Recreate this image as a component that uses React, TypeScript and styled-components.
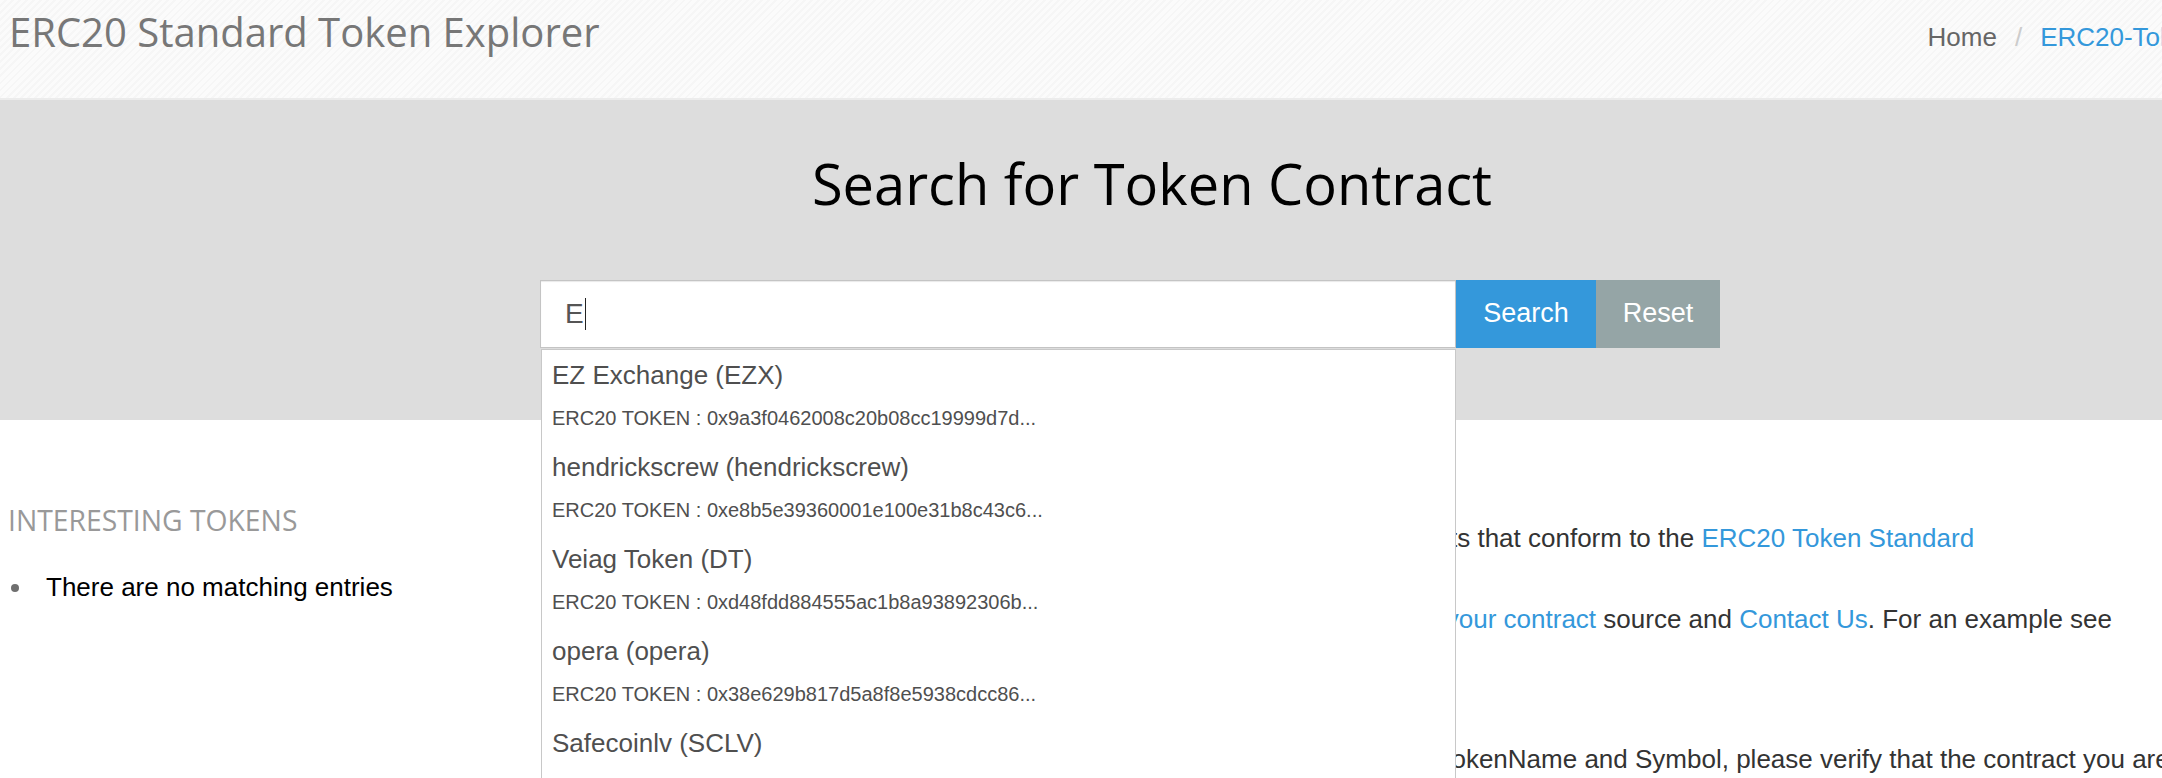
import React from "react";
import styled, { createGlobalStyle } from "styled-components";

const GlobalStyle = createGlobalStyle`
  html, body {
    margin: 0;
    padding: 0;
    background: #ffffff;
    overflow: hidden;
  }
  body {
    font-family: "Liberation Sans", Arial, Helvetica, sans-serif;
  }
  * { box-sizing: border-box; }
`;

const Page = styled.div`
  width: 2304px;
  min-height: 778px;
  background: #ffffff;
`;

const TopBar = styled.header`
  display: flex;
  align-items: flex-start;
  justify-content: space-between;
  height: 100px;
  padding: 10px 89px 0 9px;
  border-bottom: 2px solid #ececec;
  background: repeating-linear-gradient(
    135deg,
    #fbfbfb 0px,
    #fbfbfb 3px,
    #f6f6f6 3px,
    #f6f6f6 5px
  );
`;

const SiteTitle = styled.h1`
  margin: 0;
  font-family: "Open Sans", sans-serif;
  font-weight: 400;
  font-size: 40px;
  line-height: 44px;
  color: #777777;
`;

const Crumbs = styled.nav`
  display: flex;
  align-items: baseline;
  margin-top: 9px;
  font-size: 26px;
  line-height: 37px;
`;

const Crumb = styled.span<{ $active?: boolean }>`
  color: ${(p) => (p.$active ? "#3498db" : "#666666")};
  white-space: nowrap;
`;

const CrumbSep = styled.span`
  padding: 0 18px;
  color: #cccccc;
`;

const Hero = styled.section`
  background: #dddddd;
  padding: 53px 0 72px;
`;

const HeroTitle = styled.h2`
  margin: 0 0 65px;
  text-align: center;
  font-family: "Open Sans", sans-serif;
  font-weight: 400;
  font-size: 56px;
  line-height: 61.6px;
  color: #000000;
`;

const FormWrap = styled.div`
  width: 1224px;
  margin: 0 auto;
`;

const FormRow = styled.div`
  position: relative;
  display: flex;
  width: 1180px;
  height: 68px;
`;

const Field = styled.div`
  display: flex;
  align-items: center;
  width: 916px;
  height: 68px;
  padding-left: 24px;
  background: #ffffff;
  border: 1px solid #c4c4c4;
  box-shadow: inset 0 1px 1px rgba(0, 0, 0, 0.09);
  font-size: 28px;
  color: #555555;
`;

const Caret = styled.span`
  display: inline-block;
  width: 1px;
  height: 32px;
  margin-left: 1px;
  background: #222222;
`;

const ActionButton = styled.button<{ $tone: "primary" | "muted"; $w: number }>`
  width: ${(p) => p.$w}px;
  height: 68px;
  border: 0;
  margin: 0;
  padding: 0;
  background: ${(p) => (p.$tone === "primary" ? "#3498db" : "#95a5a6")};
  color: #ffffff;
  font-family: "Liberation Sans", Arial, sans-serif;
  font-size: 27px;
  cursor: pointer;
`;

const Suggestions = styled.ul`
  position: absolute;
  top: calc(100% + 1px);
  left: 1px;
  width: 915px;
  margin: 0;
  padding: 0;
  list-style: none;
  background: #ffffff;
  border: 1px solid #c8c8c8;
  z-index: 10;
`;

const Suggestion = styled.li`
  padding: 7px 10px 10px;
  color: #4f4f4f;
`;

const SuggestionName = styled.div`
  font-size: 26px;
  line-height: 37px;
  white-space: nowrap;
`;

const SuggestionAddr = styled.div`
  margin-top: 10px;
  font-size: 20px;
  line-height: 28px;
  white-space: nowrap;
`;

const Main = styled.main`
  display: grid;
  grid-template-columns: 566px 1fr;
  padding: 85px 12px 0 0;
`;

const LeftCol = styled.aside`
  padding-left: 8px;
`;

const SideHeading = styled.h3`
  margin: 0 0 34px;
  font-family: "Open Sans", sans-serif;
  font-weight: 400;
  font-size: 28.3px;
  line-height: 30.8px;
  color: #999999;
  white-space: nowrap;
`;

const SideList = styled.ul`
  margin: 0;
  padding: 0;
  list-style: none;
  font-size: 26px;
  line-height: 37px;
  color: #000000;
`;

const SideItem = styled.li`
  display: flex;
  align-items: center;
  white-space: nowrap;
  &::before {
    content: "";
    width: 8px;
    height: 8px;
    margin: 0 27px 0 3px;
    border-radius: 50%;
    background: #6f6f6f;
  }
`;

const RightCol = styled.div`
  padding-top: 15px;
  font-size: 26px;
  line-height: 37px;
  color: #333333;
`;

const Para = styled.p<{ $gap: number }>`
  margin: 0 0 ${(p) => p.$gap}px;
`;

const Link = styled.a`
  color: #3498db;
  text-decoration: none;
`;

const tokens = [
  { name: "EZ Exchange (EZX)", addr: "0x9a3f0462008c20b08cc19999d7d..." },
  { name: "hendrickscrew (hendrickscrew)", addr: "0xe8b5e39360001e100e31b8c43c6..." },
  { name: "Veiag Token (DT)", addr: "0xd48fdd884555ac1b8a93892306b..." },
  { name: "opera (opera)", addr: "0x38e629b817d5a8f8e5938cdcc86..." },
  { name: "Safecoinlv (SCLV)", addr: "0x29f2b0e4c1b4f1ac2d7f0c8f0e2..." },
  { name: "Ethereum Express (EEX)", addr: "0x1e4a81f0d2c5b7e3a6d9f8c2b1a..." },
];

export default function App() {
  return (
    <>
      <GlobalStyle />
      <Page>
        <TopBar>
          <SiteTitle>ERC20 Standard Token Explorer</SiteTitle>
          <Crumbs>
            <Crumb>Home</Crumb>
            <CrumbSep>/</CrumbSep>
            <Crumb $active>ERC20-Tokens</Crumb>
          </Crumbs>
        </TopBar>

        <Hero>
          <HeroTitle>Search for Token Contract</HeroTitle>
          <FormWrap>
            <FormRow>
              <Field>
                E<Caret />
              </Field>
              <ActionButton $tone="primary" $w={140}>
                Search
              </ActionButton>
              <ActionButton $tone="muted" $w={124}>
                Reset
              </ActionButton>
              <Suggestions>
                {tokens.map((t) => (
                  <Suggestion key={t.name}>
                    <SuggestionName>{t.name}</SuggestionName>
                    <SuggestionAddr>ERC20 TOKEN : {t.addr}</SuggestionAddr>
                  </Suggestion>
                ))}
              </Suggestions>
            </FormRow>
          </FormWrap>
        </Hero>

        <Main>
          <LeftCol>
            <SideHeading>INTERESTING TOKENS</SideHeading>
            <SideList>
              <SideItem>There are no matching entries</SideItem>
            </SideList>
          </LeftCol>
          <RightCol>
            <Para $gap={44}>
              The Etherscan ERC20 Token Explorer allows you to search for token contracts that
              conform to the <Link href="#">ERC20 Token Standard</Link>
            </Para>
            <Para $gap={66}>
              To have your Token Information and Logo shown on this page, please{" "}
              <Link href="#">Verify your contract</Link> source and <Link href="#">Contact Us</Link>.
              For an example see{" "}
              <Link href="#">0x86fa049857e0209aa7d9e616f7eb3b3b78ecfdb0</Link>
            </Para>
            <Para $gap={0}>
              Warning: Please note that there may also be multiple Tokens with the same TokenName
              and Symbol, please verify that the contract you are interacting with is the correct
              one.
            </Para>
          </RightCol>
        </Main>
      </Page>
    </>
  );
}
